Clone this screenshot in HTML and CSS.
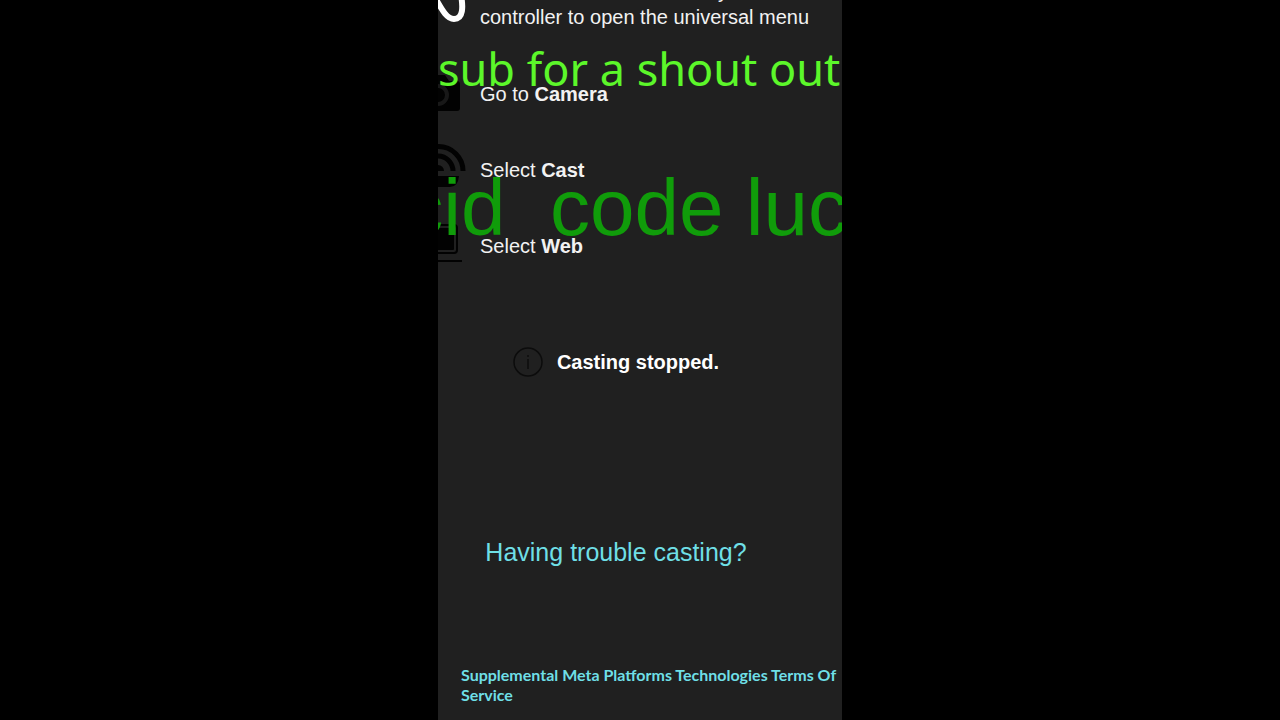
FILE: index.html
```
<!DOCTYPE html>
<html lang="en">
<head>
  <meta charset="UTF-8" />
  <meta name="viewport" content="width=device-width, initial-scale=1.0"/>
  <title>Casting</title>
  <link rel="stylesheet" href="styles.css">
</head>
<body>

  <div class="screen">
    <main class="content">
      <!-- Steps -->
      <ol class="steps">
        <li class="step step-first">
          <svg class="step-icon" viewBox="0 0 56 48" aria-hidden="true">
            <path d="M20 12 C28 22 34 41 44 41 C53 41 54 30 50 12" fill="none" stroke="#fff" stroke-width="6"/>
          </svg>
          <p>Press the Home button on your controller to open the universal menu</p>
        </li>
        <li class="step">
          <svg class="step-icon" viewBox="0 0 56 48" aria-hidden="true">
            <path d="M9 11h8l4-6h14l4 6h8q3 0 3 3v24q0 3-3 3H9q-3 0-3-3V14q0-3 3-3z" fill="#020202"/>
            <circle cx="28" cy="25" r="9" fill="none" stroke="#181818" stroke-width="4"/>
          </svg>
          <p>Go to <b>Camera</b></p>
        </li>
        <li class="step">
          <svg class="step-icon" viewBox="0 0 56 48" aria-hidden="true">
            <g fill="none" stroke="#020202" stroke-width="5">
              <path d="M4 25a24 24 0 0 1 49 0"/>
              <path d="M13 25a15 15 0 0 1 30 0"/>
            </g>
            <path d="M22 25a6 6 0 0 1 12 0z" fill="#020202"/>
            <path d="M7 30h42q-1 11-9 11H16q-8 0-9-11z" fill="#020202"/>
          </svg>
          <p>Select <b>Cast</b></p>
        </li>
        <li class="step">
          <svg class="step-icon" viewBox="0 0 56 48" aria-hidden="true">
            <rect x="9" y="3" width="38" height="28" rx="3" fill="none" stroke="#020202" stroke-width="2"/>
            <rect x="12" y="6" width="32" height="22" rx="1" fill="#020202"/>
            <path d="M4 39h48" stroke="#020202" stroke-width="2"/>
          </svg>
          <p>Select <b>Web</b></p>
        </li>
      </ol>

      <!-- Status -->
      <div class="status">
        <svg class="status-icon" viewBox="0 0 30 30" aria-hidden="true">
          <circle cx="15" cy="15" r="14" fill="none" stroke="#0c0c0c" stroke-width="1.500"/>
          <path d="M15 8v2M15 12v10" stroke="#0c0c0c" stroke-width="1.500"/>
        </svg>
        <span>Casting stopped.</span>
      </div>

      <a class="help" href="#">Having trouble casting?</a>
    </main>

    <footer class="footer">
      <a href="#">Supplemental Meta Platforms Technologies Terms Of Service</a>
    </footer>

    <!-- Stream overlays -->
    <div class="overlay overlay-sub">sub for a shout out</div>
    <div class="overlay overlay-code">lucid  code lucid</div>
  </div>

</body>
</html>
```
FILE: styles.css
```
* {
  box-sizing: border-box;
}

body {
  margin: 0;
  background: #000;
  color: #f2f2f2;
  font-family: "Liberation Sans", Arial, sans-serif;
  font-size: 20px;
  line-height: 24px;
}

a {
  color: #6fdfe6;
  text-decoration: none;
}

.screen {
  position: relative;
  overflow: hidden;
  max-width: 404px;
  min-height: 100vh;
  margin: 0 auto;
  background: #202020;
}

.content {
  display: flex;
  flex-direction: column;
  align-items: center;
  margin-left: -48px;
}

.steps {
  display: flex;
  flex-direction: column;
  gap: 28px;
  align-self: stretch;
  list-style: none;
  margin: -22px 0 0;
  padding: 0 20px;
}

.step {
  display: flex;
  align-items: center;
  gap: 14px;
  min-height: 48px;
}

.step-first {
  align-items: flex-start;
  min-height: 64px;
  line-height: 26px;
}

.step p {
  margin: 0;
}

.step-icon {
  flex: none;
  width: 56px;
  height: 48px;
  overflow: visible;
}

.status {
  display: flex;
  align-items: center;
  gap: 14px;
  margin-top: 77px;
  color: #fff;
  font-weight: bold;
}

.status-icon {
  width: 30px;
  height: 30px;
}

.help {
  margin-top: 160px;
  font-size: 25px;
  line-height: 30px;
}

.footer {
  margin-top: 98px;
  padding: 0 0 14px 23px;
  font-family: Lato, sans-serif;
  font-size: 16px;
  font-weight: 700;
  line-height: 20px;
}

.overlay {
  position: absolute;
  white-space: pre;
}

.overlay-sub {
  top: 39px;
  left: 0;
  color: #5cf72a;
  font-family: "Noto Sans", "Segoe UI", sans-serif;
  font-size: 45px;
  line-height: 60px;
}

.overlay-code {
  top: 162px;
  left: -97px;
  color: #109c0a;
  font-size: 80px;
  line-height: 92px;
}
```
